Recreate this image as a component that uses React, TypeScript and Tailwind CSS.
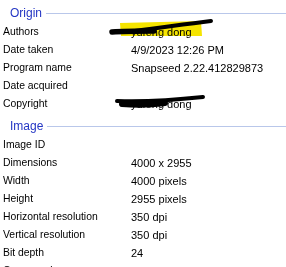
const origin: [string, string][] = [
  ["Authors", "yufeng dong"],
  ["Date taken", "4/9/2023 12:26 PM"],
  ["Program name", "Snapseed 2.22.412829873"],
  ["Date acquired", ""],
  ["Copyright", "yufeng dong"],
];

const image: [string, string][] = [
  ["Image ID", ""],
  ["Dimensions", "4000 x 2955"],
  ["Width", "4000 pixels"],
  ["Height", "2955 pixels"],
  ["Horizontal resolution", "350 dpi"],
  ["Vertical resolution", "350 dpi"],
  ["Bit depth", "24"],
  ["Compression", ""],
];

const Group = ({ title }: { title: string }) => (
  <div className="h-[23px] flex items-center pl-[10px] pt-[3px]">
    <span className="text-[12px] leading-none text-[#2436c4]">{title}</span>
    <div className="flex-1 h-px bg-[#b9c7ea] ml-[4px] mt-[1px]" />
  </div>
);

const Row = ({ label, value }: { label: string; value: string }) => (
  <div className="h-[18px] flex items-center text-black">
    <span className="w-[131px] pl-[3px] text-[10.4px]">{label}</span>
    <span className="text-[11px]">{value}</span>
  </div>
);

export default function App() {
  return (
    <div className="relative w-[286px] h-[267px] overflow-hidden bg-white font-['Liberation_Sans',Arial,sans-serif]">
      <div className="flex flex-col">
        <Group title="Origin" />
        {origin.map(([l, v]) => (
          <Row key={l} label={l} value={v} />
        ))}
        <Group title="Image" />
        {image.map(([l, v]) => (
          <Row key={l} label={l} value={v} />
        ))}
      </div>

      {/* marker scribbles over the personal data */}
      <svg className="absolute top-0 left-0 pointer-events-none" width="286" height="267">
        <polygon className="mix-blend-multiply" points="120,23 201,21 202,36 121,36" fill="#f5e400" />
        <path d="M112 32 C 125 31, 140 31, 154 31" stroke="#000" strokeWidth="5.5" strokeLinecap="round" fill="none" />
        <path d="M135 31 C 160 28, 185 24, 211 21" stroke="#000" strokeWidth="4" strokeLinecap="round" fill="none" />
        <path d="M117 101 C 145 102, 175 100, 203 97" stroke="#000" strokeWidth="4" strokeLinecap="round" fill="none" />
        <path d="M122 104 C 135 105, 150 105, 165 103" stroke="#000" strokeWidth="6" strokeLinecap="round" fill="none" />
      </svg>
    </div>
  );
}
